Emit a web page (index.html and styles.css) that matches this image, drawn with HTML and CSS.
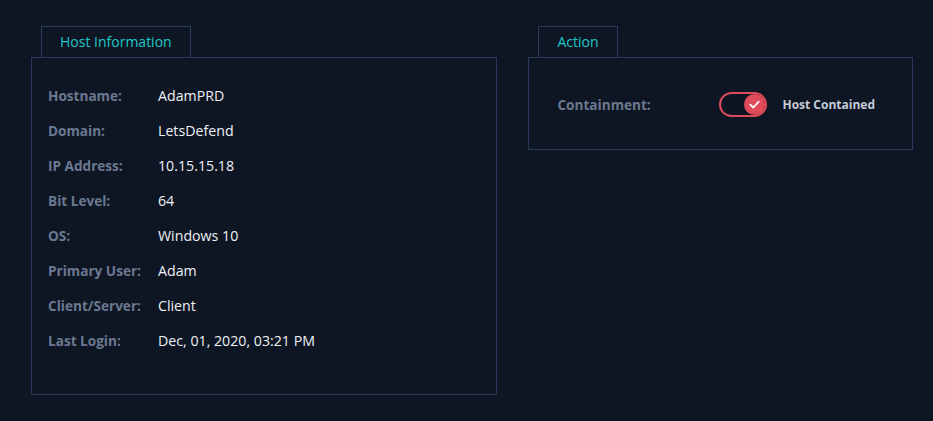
FILE: index.html
```html
<!DOCTYPE html>
<html lang="en">
<head>
    <meta charset="UTF-8">
    <meta name="viewport" content="width=device-width, initial-scale=1.0">
    <title>Endpoint - AdamPRD</title>
    <link rel="stylesheet" href="styles.css">
</head>
<body>
    <div class="layout">
        <section class="card host">
            <div class="tab">Host Information</div>
            <div class="panel">
                <dl class="info">
                    <dt>Hostname:</dt><dd>AdamPRD</dd>
                    <dt>Domain:</dt><dd>LetsDefend</dd>
                    <dt>IP Address:</dt><dd>10.15.15.18</dd>
                    <dt>Bit Level:</dt><dd>64</dd>
                    <dt>OS:</dt><dd>Windows 10</dd>
                    <dt>Primary User:</dt><dd>Adam</dd>
                    <dt>Client/Server:</dt><dd>Client</dd>
                    <dt>Last Login:</dt><dd>Dec, 01, 2020, 03:21 PM</dd>
                </dl>
            </div>
        </section>

        <section class="card action">
            <div class="tab">Action</div>
            <div class="panel">
                <div class="contain-row">
                    <span class="label">Containment:</span>
                    <label class="switch">
                        <input type="checkbox" checked>
                        <span class="knob">
                            <svg width="13" height="13" viewBox="0 0 12 12">
                                <path d="M2.2 6.2 L4.9 8.8 L9.9 3.4" fill="none" stroke="#fff" stroke-width="1.6" stroke-linecap="round" stroke-linejoin="round"/>
                            </svg>
                        </span>
                    </label>
                    <span class="state">Host Contained</span>
                </div>
            </div>
        </section>
    </div>
</body>
</html>
```

FILE: styles.css
```css
body {
    margin: 0;
    background-color: #0e1624;
    font-family: "Open Sans", "Noto Sans", Arial, sans-serif;
    color: #e8ecf2;
}
.layout {
    display: flex;
    align-items: flex-start;
    gap: 31px;
    padding: 26px 20px 0 31px;
}
.card {
    display: flex;
    flex-direction: column;
}
.host {
    width: 467px;
}
.action {
    width: 385px;
}
.tab {
    align-self: flex-start;
    margin-left: 10px;
    height: 30px;
    line-height: 30px;
    padding: 0 18px;
    border: 1px solid #283a5a;
    border-bottom: none;
    color: #1ec8c8;
    font-size: 14px;
}
.panel {
    border: 1px solid #283a5a;
}
.host .panel {
    height: 338px;
    box-sizing: border-box;
    padding: 28px 16px 0;
}
.info {
    display: grid;
    grid-template-columns: 110px 1fr;
    grid-auto-rows: 35px;
    margin: 0;
}
.info dt {
    color: #6b7990;
    font-weight: 700;
    font-size: 13.6px;
}
.info dd {
    margin: 0;
    color: #eef1f5;
    font-size: 14.2px;
}
.action .panel {
    height: 93px;
    box-sizing: border-box;
    padding: 2px 28px 0;
    display: flex;
    align-items: center;
}
.contain-row {
    display: flex;
    align-items: center;
}
.label {
    width: 162px;
    color: #6b7990;
    font-weight: 700;
    font-size: 13.6px;
}
.switch {
    position: relative;
    width: 44px;
    height: 21px;
    border: 2px solid #e04b5a;
    border-radius: 13px;
    background: #0d1522;
}
.switch input {
    display: none;
}
.knob {
    position: absolute;
    right: 0;
    top: 0;
    width: 21px;
    height: 21px;
    border-radius: 50%;
    background: #e04b5a;
    display: flex;
    align-items: center;
    justify-content: center;
}
.state {
    margin-left: 15px;
    color: #c4cbd6;
    font-size: 12px;
    font-weight: 700;
}
```
